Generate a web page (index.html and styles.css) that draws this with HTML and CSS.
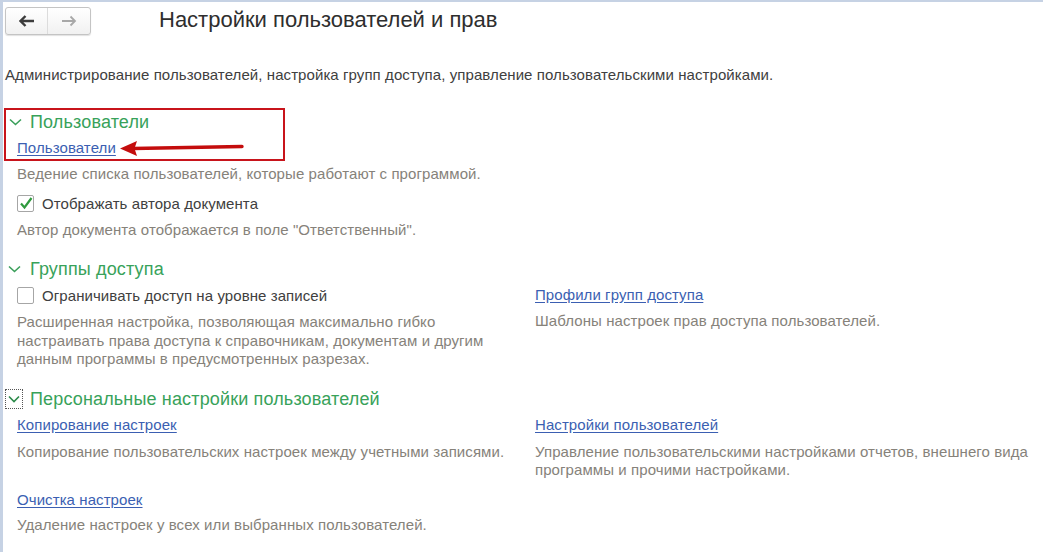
FILE: index.html
```html
<!DOCTYPE html>
<html lang="ru">
<head>
<meta charset="utf-8">
<title>Настройки пользователей и прав</title>
<link rel="stylesheet" href="styles.css">
</head>
<body>
<div class="page">
  <header class="toolbar">
    <div class="navbtns">
      <button class="nav nav-back" type="button">
        <svg width="16" height="12" viewBox="0 0 16 12"><path d="M1 6h14M6.5 1L1.5 6l5 5" fill="none" stroke="#3c3c3c" stroke-width="2.4"/></svg>
      </button>
      <button class="nav nav-fwd" type="button">
        <svg width="16" height="12" viewBox="0 0 16 12"><path d="M1 6h13M9.5 1.5L14 6l-4.5 4.5" fill="none" stroke="#a8a8a8" stroke-width="1.8"/></svg>
      </button>
    </div>
    <h1 class="title">Настройки пользователей и прав</h1>
  </header>

  <p class="intro">Администрирование пользователей, настройка групп доступа, управление пользовательскими настройками.</p>

  <section class="group group-users">
    <div class="highlight">
      <h2 class="group-head"><span class="chev"><svg width="13" height="8" viewBox="0 0 13 8"><path d="M1 1.5l5.5 5 5.5-5" fill="none" stroke="#3a9f5a" stroke-width="1.6"/></svg></span>Пользователи</h2>
      <a class="link link-first" href="#">Пользователи</a>
      <svg class="arrow" width="128" height="18" viewBox="0 0 128 18"><path d="M14 9.5L123 7.5" stroke="#c40d0d" stroke-width="3.4" stroke-linecap="round" fill="none"/><path d="M1 9.5L18 2L15.5 9.5L18 17z" fill="#c40d0d"/></svg>
    </div>
    <p class="note note-a">Ведение списка пользователей, которые работают с программой.</p>
    <label class="check check-a"><span class="box checked"><svg width="14" height="13" viewBox="0 0 14 13"><path d="M2 6.5l3.5 4L12.5 1" fill="none" stroke="#2f9a3e" stroke-width="2.2"/></svg></span>Отображать автора документа</label>
    <p class="note note-b">Автор документа отображается в поле "Ответственный".</p>
  </section>

  <section class="group group-access">
    <h2 class="group-head"><span class="chev"><svg width="13" height="8" viewBox="0 0 13 8"><path d="M1 1.5l5.5 5 5.5-5" fill="none" stroke="#3a9f5a" stroke-width="1.6"/></svg></span>Группы доступа</h2>
    <div class="cols">
      <div class="col">
        <label class="check"><span class="box"></span>Ограничивать доступ на уровне записей</label>
        <p class="note note-c">Расширенная настройка, позволяющая максимально гибко настраивать права доступа к справочникам, документам и другим данным программы в предусмотренных разрезах.</p>
      </div>
      <div class="col col-right">
        <a class="link link-r" href="#">Профили групп доступа</a>
        <p class="note note-d">Шаблоны настроек прав доступа пользователей.</p>
      </div>
    </div>
  </section>

  <section class="group group-personal">
    <h2 class="group-head"><span class="chev chev-focus"><svg width="12" height="8" viewBox="0 0 12 8"><path d="M1 1.5l5 5 5-5" fill="none" stroke="#2c8a4a" stroke-width="1.6"/></svg></span>Персональные настройки пользователей</h2>
    <div class="cols cols-p">
      <div class="col">
        <a class="link" href="#">Копирование настроек</a>
        <p class="note note-d">Копирование пользовательских настроек между учетными записями.</p>
        <a class="link link-clear" href="#">Очистка настроек</a>
        <p class="note note-d">Удаление настроек у всех или выбранных пользователей.</p>
      </div>
      <div class="col col-right">
        <a class="link" href="#">Настройки пользователей</a>
        <p class="note note-d note-wide">Управление пользовательскими настройками отчетов, внешнего вида программы и прочими настройками.</p>
      </div>
    </div>
  </section>
</div>
</body>
</html>
```

FILE: styles.css
```css
html, body {
  margin: 0;
  padding: 0;
  background: #ffffff;
}

body {
  font-family: "Liberation Sans", Arial, sans-serif;
  color: #404040;
  font-size: 15px;
  letter-spacing: 0.08px;
}

.page {
  box-sizing: border-box;
  width: 1043px;
  height: 552px;
  border-top: 2px solid #c6d2e4;
  border-left: 3px solid #c6d2e4;
  padding-left: 2px;
  overflow: hidden;
}

.toolbar {
  display: flex;
  align-items: center;
  height: 36px;
}

.navbtns {
  display: flex;
  height: 28px;
  margin-top: 1px;
  border: 1px solid #c4c4c4;
  border-radius: 3px;
  background: linear-gradient(#ffffff, #f1f1f1);
  box-shadow: 0 1px 1px rgba(0, 0, 0, 0.12);
  box-sizing: border-box;
}

.nav {
  width: 42px;
  height: 26px;
  border: 0;
  padding: 0;
  margin: 0;
  background: transparent;
  display: flex;
  align-items: center;
  justify-content: center;
}

.nav-back {
  border-right: 1px solid #dcdcdc;
  width: 42px;
}

.title {
  margin: 0 0 0 68px;
  font-size: 22px;
  font-weight: normal;
  letter-spacing: 0;
  color: #2e2e2e;
  line-height: 26px;
}

.intro {
  margin: 28px 0 0 0;
  line-height: 18px;
  color: #404040;
}

.group-head {
  display: flex;
  align-items: center;
  margin: 0;
  height: 22px;
  font-size: 18px;
  font-weight: normal;
  letter-spacing: 0.15px;
  color: #38a25a;
  line-height: 22px;
}

.chev {
  display: inline-flex;
  width: 25px;
  padding-left: 3px;
  box-sizing: border-box;
  align-items: center;
}

.highlight .chev {
  width: 24px;
  padding-left: 3px;
}

.chev-focus {
  width: 18px;
  height: 20px;
  margin-right: 7px;
  border: 1px dotted #555;
  justify-content: center;
  padding: 0;
  box-sizing: border-box;
}

.group-users {
  margin-top: 24px;
}

.highlight {
  position: relative;
  box-sizing: border-box;
  width: 281px;
  height: 53px;
  margin-left: -1px;
  border: 2px solid #c8141b;
  padding: 1px 0 0 0;
}

.link {
  display: block;
  width: max-content;
  color: #3b5fb2;
  text-decoration: underline;
  text-underline-offset: 2px;
  line-height: 18px;
  padding-left: 12px;
}

.link-first {
  margin-top: 6px;
  padding-left: 11px;
}

.arrow {
  position: absolute;
  left: 113px;
  top: 29px;
}

.note {
  margin: 8px 0 0 0;
  padding-left: 12px;
  color: #86827a;
  line-height: 18px;
}

.note-a {
  margin-top: 4px;
}

.check {
  display: flex;
  align-items: center;
  height: 20px;
  margin-top: 10px;
  padding-left: 12px;
  color: #404040;
}

.box {
  box-sizing: border-box;
  width: 17px;
  height: 17px;
  border: 1px solid #a6a6a6;
  border-radius: 2px;
  background: #fff;
  margin-right: 8px;
  display: inline-flex;
  align-items: center;
  justify-content: center;
}

.group-access {
  margin-top: 19px;
}

.cols {
  display: grid;
  grid-template-columns: 530px 1fr;
}

.col-right .link {
  margin-top: 6px;
  padding-left: 0;
}

.col-right .note {
  padding-left: 0;
}

.group-access .check {
  margin-top: 5px;
}

.note-c {
  line-height: 18.5px;
  width: 490px;
}

.group-personal {
  margin-top: 19px;
}

.cols-p .link {
  margin-top: 6px;
}

.cols-p .note {
  margin-top: 9px;
}

.cols-p .note-wide {
  width: 500px;
}

.cols-p .link-clear {
  margin-top: 30px;
}

.cols-p .link-clear + .note {
  margin-top: 7px;
}
```
